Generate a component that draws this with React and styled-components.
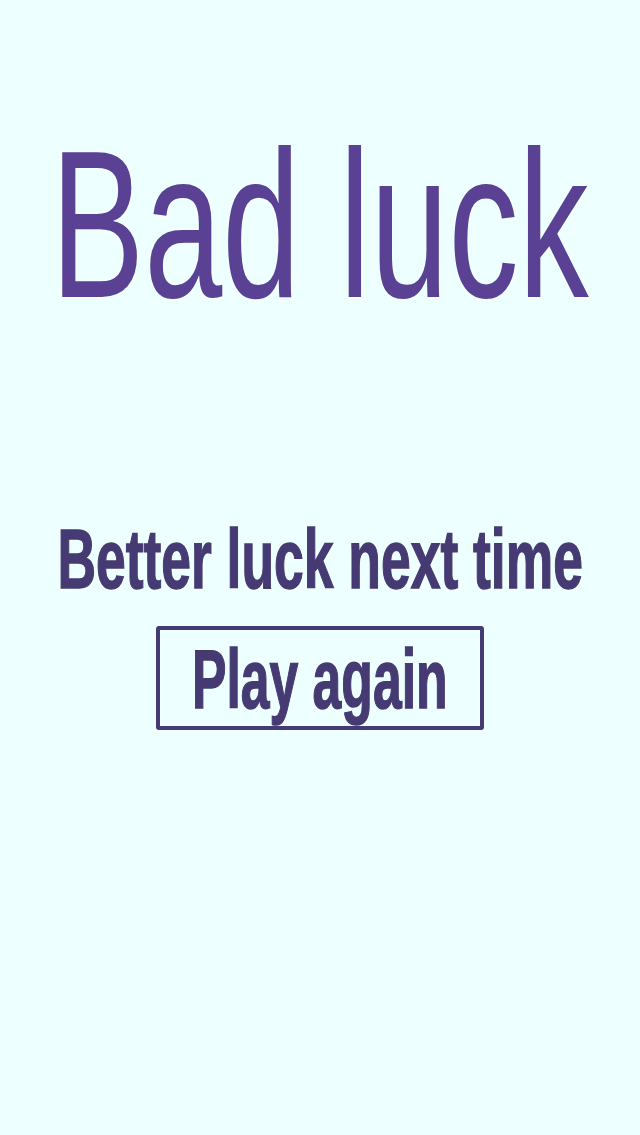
import styled, { createGlobalStyle } from "styled-components";

const Global = createGlobalStyle`
    html, body {
        margin: 0;
        padding: 0;
        background: #edfffe;
    }
    body {
        font-family: "Liberation Sans", Arial, sans-serif;
        overflow: hidden;
    }
`
const Page = styled.div`
    height: 1135px;
    display: flex;
    flex-direction: column;
    align-items: center;
    overflow: hidden;
`
const Squeeze = styled.span`
    display: inline-block;
    white-space: nowrap;
    transform: scaleX(${p => p.$sx});
    transform-origin: center;
`
const Title = styled.h1`
    margin: 120px 0 0;
    font-size: 210px;
    line-height: 1;
    font-weight: 400;
    color: #5b4193;
    display: flex;
    justify-content: center;
    width: 100%;
`
const Sub = styled.h2`
    margin: 187px 0 0;
    font-size: 84px;
    line-height: 1;
    font-weight: 700;
    color: #463a73;
    -webkit-text-stroke: 1.5px #463a73;
    display: flex;
    justify-content: center;
    width: 100%;
`
const Button = styled.button`
    margin-top: 25px;
    width: 328px;
    box-sizing: border-box;
    padding: 7px 0 5px;
    border: 4px solid #463a73;
    border-radius: 3px;
    background: transparent;
    font-family: inherit;
    font-size: 84px;
    line-height: 1;
    font-weight: 700;
    color: #463a73;
    -webkit-text-stroke: 1.5px #463a73;
    display: flex;
    justify-content: center;
    cursor: pointer;
`
export default function App(){
    return(
        <Page>
            <Global />
            <Title><Squeeze $sx={0.668}>Bad luck</Squeeze></Title>
            <Sub><Squeeze $sx={0.636}>Better luck next time</Squeeze></Sub>
            <Button><Squeeze $sx={0.615}>Play again</Squeeze></Button>
        </Page>
    );
}
